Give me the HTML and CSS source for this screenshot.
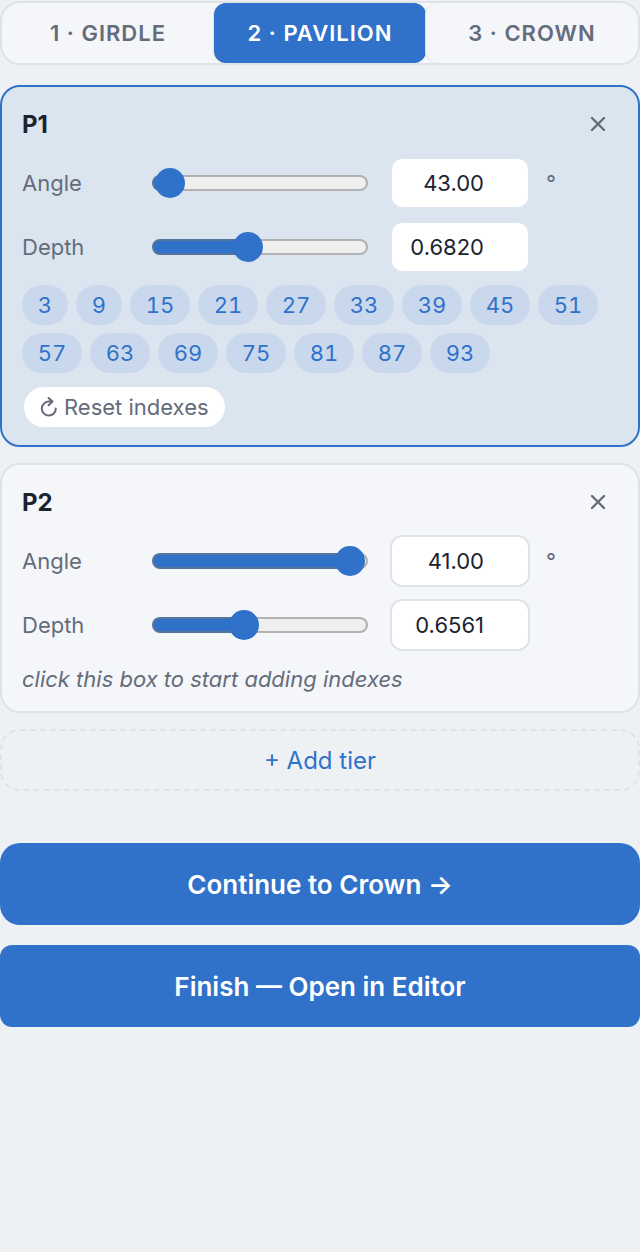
FILE: index.html
```html
<!DOCTYPE html>
<html lang="en">
<head>
    <meta charset="utf-8">
    <meta name="viewport" content="width=device-width, initial-scale=1">
    <title>Tiers - Pavilion</title>
    <link rel="stylesheet" href="styles.css">
</head>
<body>

<nav class="steps">
    <button type="button" class="step">1 · GIRDLE</button>
    <button type="button" class="step active" aria-current="step">2 · PAVILION</button>
    <button type="button" class="step">3 · CROWN</button>
</nav>

<main>
    <section class="tier selected">
        <div class="tier-head">
            <h2>P1</h2>
            <button type="button" class="remove" aria-label="Remove P1">
                <svg width="16" height="16" viewBox="0 0 16 16"><path d="M2 2l12 12M14 2L2 14"/></svg>
            </button>
        </div>
        <div class="row">
            <label for="p1_angle">Angle</label>
            <input type="range" aria-label="P1 angle" min="0" max="1000" value="5" style="--fill: 8%">
            <input type="number" id="p1_angle" step="0.01" value="43.00">
            <span class="unit">°</span>
        </div>
        <div class="row">
            <label for="p1_depth">Depth</label>
            <input type="range" aria-label="P1 depth" min="0" max="1000" value="435" style="--fill: 44%">
            <input type="number" id="p1_depth" step="0.0001" value="0.6820">
        </div>
        <div class="indexes">
            <button type="button" class="chip single">3</button>
            <button type="button" class="chip single">9</button>
            <button type="button" class="chip">15</button>
            <button type="button" class="chip">21</button>
            <button type="button" class="chip">27</button>
            <button type="button" class="chip">33</button>
            <button type="button" class="chip">39</button>
            <button type="button" class="chip">45</button>
            <button type="button" class="chip">51</button>
            <button type="button" class="chip">57</button>
            <button type="button" class="chip">63</button>
            <button type="button" class="chip">69</button>
            <button type="button" class="chip">75</button>
            <button type="button" class="chip">81</button>
            <button type="button" class="chip">87</button>
            <button type="button" class="chip">93</button>
        </div>
        <button type="button" class="reset">
            <svg width="18" height="20" viewBox="0 0 18 20"><path d="M12 4.6H8.5a7 7 0 1 0 7.3 7M8.6 1l3.9 3.6-3.9 3.6"/></svg>
            Reset indexes
        </button>
    </section>

    <section class="tier">
        <div class="tier-head">
            <h2>P2</h2>
            <button type="button" class="remove" aria-label="Remove P2">
                <svg width="16" height="16" viewBox="0 0 16 16"><path d="M2 2l12 12M14 2L2 14"/></svg>
            </button>
        </div>
        <div class="row">
            <label for="p2_angle">Angle</label>
            <input type="range" aria-label="P2 angle" min="0" max="1000" value="995" style="--fill: 92%">
            <input type="number" id="p2_angle" step="0.01" value="41.00">
            <span class="unit">°</span>
        </div>
        <div class="row">
            <label for="p2_depth">Depth</label>
            <input type="range" aria-label="P2 depth" min="0" max="1000" value="414" style="--fill: 42%">
            <input type="number" id="p2_depth" step="0.0001" value="0.6561">
        </div>
        <p class="hint">click this box to start adding indexes</p>
    </section>

    <button type="button" class="add">+ Add tier</button>
</main>

<div class="actions">
    <button type="button" class="primary next">Continue to Crown →</button>
    <button type="button" class="primary">Finish — Open in Editor</button>
</div>

</body>
</html>
```
FILE: styles.css
```css
:root {
    --blue: #3072c9;
    --page: #edf1f4;
    --card: #f4f6fa;
    --card-on: #dbe5f0;
    --line: #dfe3e8;
    --text: #1c2330;
    --muted: #646c7a;
}

* {
    box-sizing: border-box;
}

body {
    margin: 0;
    padding-top: 1px;
    background: var(--page);
    color: var(--text);
    font-family: Inter, "Liberation Sans", sans-serif;
    font-size: 22px;
}

button, input {
    font: inherit;
    margin: 0;
}

button {
    cursor: pointer;
}

svg {
    fill: none;
    stroke: currentColor;
    stroke-width: 2;
    stroke-linecap: round;
    stroke-linejoin: round;
}

/* step tabs */
.steps {
    display: flex;
    height: 64px;
    border: 2px solid var(--line);
    border-radius: 20px;
    background: var(--card);
    overflow: hidden;
}

.step {
    flex: 1;
    padding: 0;
    border: 0;
    border-radius: 12px;
    background: none;
    color: var(--muted);
    font-weight: 600;
    letter-spacing: 1px;
}

.step + .step {
    box-shadow: -1px 0 0 var(--line);
}

.step.active {
    background: var(--blue);
    color: #fff;
}

/* tiers */
main {
    display: flex;
    flex-direction: column;
    gap: 16px;
    margin-top: 20px;
}

.tier {
    display: flex;
    flex-direction: column;
    gap: 12px;
    padding: 16px 20px;
    border: 2px solid var(--line);
    border-radius: 20px;
    background: var(--card);
}

.tier.selected {
    border-color: var(--blue);
    background: var(--card-on);
}

.tier-head {
    display: flex;
    align-items: center;
    justify-content: space-between;
    height: 42px;
}

h2 {
    margin: 0;
    font-size: 24px;
    font-weight: 700;
}

.remove {
    display: flex;
    align-items: center;
    justify-content: center;
    width: 40px;
    height: 40px;
    padding: 0;
    border: 0;
    background: none;
    color: var(--muted);
}

.remove svg {
    stroke-width: 2.4;
}

.row {
    display: grid;
    grid-template-columns: 114px 1fr 140px 72px;
    gap: 16px;
    align-items: center;
    color: var(--muted);
}

input[type=range] {
    -webkit-appearance: none;
    appearance: none;
    min-width: 0;
    height: 30px;
    margin-right: 6px;
    background: none;
}

input[type=range]::-webkit-slider-runnable-track {
    height: 16px;
    border: 2px solid rgba(118, 118, 118, .5);
    border-radius: 8px;
    background: linear-gradient(to right, var(--blue) var(--fill), #efefef var(--fill)) border-box;
}

input[type=range]::-webkit-slider-thumb {
    -webkit-appearance: none;
    width: 30px;
    height: 30px;
    margin-top: -9px;
    border-radius: 50%;
    background: var(--blue);
}

input[type=number] {
    -webkit-appearance: none;
    appearance: textfield;
    width: 100%;
    height: 52px;
    padding: 0 44px 0 12px;
    border: 2px solid var(--line);
    border-radius: 12px;
    background: #fff;
    color: var(--text);
    text-align: right;
}

input[type=number]::-webkit-inner-spin-button {
    display: none;
}

.selected input[type=number] {
    border-color: var(--card-on);
}

.indexes {
    display: flex;
    flex-wrap: wrap;
    gap: 8px;
}

.chip {
    width: 60px;
    height: 40px;
    padding: 0;
    border: 0;
    border-radius: 20px;
    background: #c9d8ec;
    color: var(--blue);
    font-variant-numeric: tabular-nums;
}

.chip.single {
    width: 46px;
}

.reset {
    display: flex;
    align-items: center;
    gap: 6px;
    align-self: flex-start;
    height: 44px;
    padding: 0 16px;
    border: 2px solid var(--card-on);
    border-radius: 22px;
    background: #fff;
    color: var(--muted);
}

.hint {
    margin: 0;
    color: var(--muted);
    font-style: italic;
    line-height: 32px;
}

.add {
    height: 62px;
    border: 2px dashed var(--line);
    border-radius: 20px;
    background: none;
    color: var(--blue);
    font-size: 24px;
}

/* bottom buttons */
.actions {
    display: flex;
    flex-direction: column;
    gap: 20px;
    margin-top: 52px;
}

.primary {
    height: 82px;
    border: 0;
    border-radius: 12px;
    background: var(--blue);
    color: #fff;
    font-size: 26px;
    font-weight: 600;
}

.primary.next {
    border-radius: 20px;
}
```
